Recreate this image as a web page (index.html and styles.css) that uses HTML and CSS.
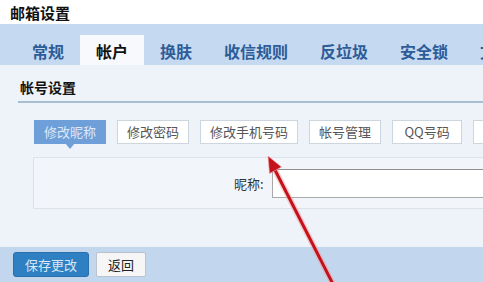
FILE: index.html
```html
<!DOCTYPE html>
<html lang="zh-CN">
<head>
    <meta charset="UTF-8">
    <title>邮箱设置</title>
    <link rel="stylesheet" href="styles.css">
</head>
<body>

<div class="page">
    <h1 class="page-title">邮箱设置</h1>

    <nav class="tabs">
        <a href="#" class="tab">常规</a>
        <a href="#" class="tab active">帐户</a>
        <a href="#" class="tab">换肤</a>
        <a href="#" class="tab">收信规则</a>
        <a href="#" class="tab">反垃圾</a>
        <a href="#" class="tab">安全锁</a>
        <a href="#" class="tab">文件夹</a>
    </nav>

    <section class="settings">
        <h2 class="section-title">帐号设置</h2>

        <div class="sub-tabs">
            <button class="sub-tab active">修改昵称</button>
            <button class="sub-tab">修改密码</button>
            <button class="sub-tab">修改手机号码</button>
            <button class="sub-tab">帐号管理</button>
            <button class="sub-tab sub-tab-qq">QQ号码</button>
            <button class="sub-tab">别名</button>
        </div>

        <div class="form-box">
            <label class="field-label" for="nickname">昵称:</label>
            <input type="text" id="nickname" class="field-input">
        </div>
    </section>

    <footer class="actions">
        <button class="btn btn-primary">保存更改</button>
        <button class="btn">返回</button>
    </footer>

    <!-- annotation arrow drawn over the screenshot -->
    <svg class="arrow" width="483" height="282" viewBox="0 0 483 282">
        <line x1="337" y1="292" x2="275" y2="170" stroke="#f3a0a4" stroke-width="6" stroke-opacity="0.5"/>
        <line x1="337" y1="292" x2="275" y2="170" stroke="#c4121b" stroke-width="3"/>
        <polygon points="268,156 281.5,167 269.5,173.5" fill="#c4121b" stroke="#f3a0a4" stroke-width="1" stroke-opacity="0.6"/>
    </svg>
</div>

</body>
</html>
```

FILE: styles.css
```css
body {
    margin: 0;
    padding: 0;
    background-color: #fff;
    font-family: "Noto Sans CJK SC", "Liberation Sans", sans-serif;
    overflow: hidden;
}

.page {
    position: relative;
    width: 483px;
    height: 282px;
    overflow: hidden;
}

.page-title {
    margin: 0;
    height: 24px;
    padding-left: 10px;
    font-size: 15px;
    line-height: 25px;
    font-weight: bold;
    color: #111;
}

.tabs {
    display: flex;
    height: 41px;
    padding: 11px 0 0 16px;
    box-sizing: border-box;
    background-color: #c5d9f0;
    white-space: nowrap;
}

.tab {
    flex: none;
    height: 30px;
    padding: 0 16px;
    font-size: 16px;
    line-height: 32px;
    font-weight: bold;
    color: #2d5c98;
    text-decoration: none;
}

.tab.active {
    background-color: #f7f9fc;
    color: #111;
}

.settings {
    height: 182px;
    padding-top: 12px;
    box-sizing: border-box;
    background-color: #eef3fa;
}

.section-title {
    margin: 0 0 0 18px;
    padding: 0 0 4px 2px;
    font-size: 14px;
    line-height: 20px;
    font-weight: bold;
    color: #111;
    border-bottom: 2px solid #a8bcd2;
}

.sub-tabs {
    display: flex;
    gap: 11px;
    margin: 17px 0 0 34px;
    white-space: nowrap;
}

.sub-tab {
    position: relative;
    flex: none;
    height: 24px;
    padding: 0 9px;
    font-family: inherit;
    font-size: 13px;
    line-height: 22px;
    color: #555;
    background-color: #fff;
    border: 1px solid #cdd5df;
    border-radius: 0;
}

.sub-tab-qq {
    min-width: 70px;
}

.sub-tab.active {
    background-color: #6f9fd8;
    border-color: #6f9fd8;
    color: #dce9f8;
}

.sub-tab.active::after {
    content: "";
    position: absolute;
    left: 50%;
    bottom: -6px;
    margin-left: -5px;
    border-left: 5px solid transparent;
    border-right: 5px solid transparent;
    border-top: 6px solid #6f9fd8;
}

.form-box {
    display: flex;
    align-items: center;
    height: 52px;
    margin: 13px 0 0 33px;
    padding-left: 200px;
    box-sizing: border-box;
    border: 1px solid #dbe2eb;
    border-right: none;
    background-color: #f2f6fb;
    white-space: nowrap;
}

.field-label {
    flex: none;
    width: 32px;
    font-size: 13px;
    color: #333;
}

.field-input {
    flex: none;
    width: 240px;
    height: 29px;
    margin-left: 6px;
    box-sizing: border-box;
    border: 1px solid #a9a9a9;
    border-top-color: #8e8e8e;
    background-color: #fff;
}

.actions {
    display: flex;
    gap: 7px;
    height: 35px;
    padding: 5px 0 0 13px;
    box-sizing: border-box;
    background-color: #c2d6ee;
}

.btn {
    height: 25px;
    padding: 0 11px;
    font-family: inherit;
    font-size: 13px;
    line-height: 23px;
    color: #222;
    background-color: #f6f6f6;
    border: 1px solid #b9c3cf;
    border-radius: 2px;
}

.btn-primary {
    padding: 0 11px;
    background-color: #2f80c3;
    border-color: #2a6fab;
    color: #d6e7f7;
    border-radius: 3px;
}

.arrow {
    position: absolute;
    top: 0;
    left: 0;
    pointer-events: none;
}
```
